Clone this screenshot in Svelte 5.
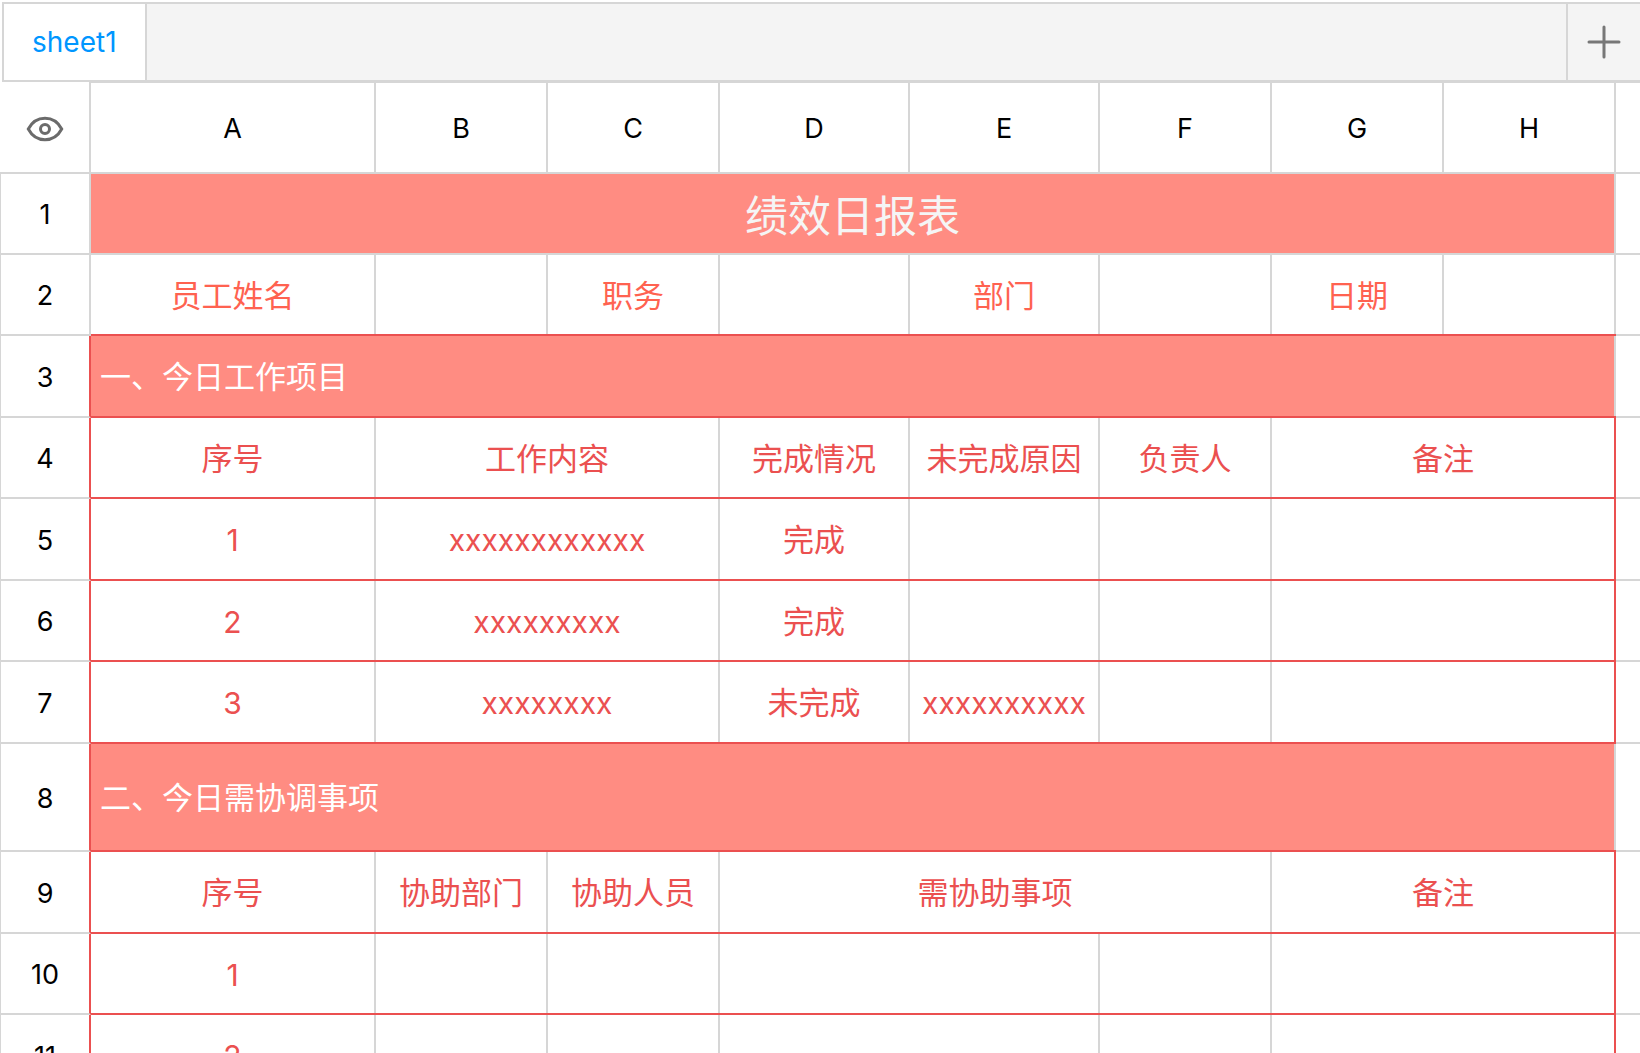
<script lang="ts">
  type Cell = { text?: string; span?: number; kind?: string };
  type Row = { height: number; theme: string; cells: Cell[] };

  const columns = [
    { name: 'A', width: 285 },
    { name: 'B', width: 172 },
    { name: 'C', width: 172 },
    { name: 'D', width: 190 },
    { name: 'E', width: 190 },
    { name: 'F', width: 172 },
    { name: 'G', width: 172 },
    { name: 'H', width: 172 }
  ];

  // Each row lists its cells from left to right; merged cells carry a span
  const rows: Row[] = [
    { height: 81, theme: 'title', cells: [{ text: '绩效日报表', span: 8 }] },
    {
      height: 81,
      theme: 'info',
      cells: [
        { text: '员工姓名' },
        {},
        { text: '职务' },
        {},
        { text: '部门' },
        {},
        { text: '日期' },
        {}
      ]
    },
    { height: 82, theme: 'section', cells: [{ text: '一、今日工作项目', span: 8 }] },
    {
      height: 81,
      theme: 'detail',
      cells: [
        { text: '序号' },
        { text: '工作内容', span: 2 },
        { text: '完成情况' },
        { text: '未完成原因' },
        { text: '负责人' },
        { text: '备注', span: 2 }
      ]
    },
    {
      height: 82,
      theme: 'detail',
      cells: [
        { text: '1', kind: 'latin' },
        { text: 'xxxxxxxxxxxx', span: 2, kind: 'latin' },
        { text: '完成' },
        {},
        {},
        { span: 2 }
      ]
    },
    {
      height: 81,
      theme: 'detail',
      cells: [
        { text: '2', kind: 'latin' },
        { text: 'xxxxxxxxx', span: 2, kind: 'latin' },
        { text: '完成' },
        {},
        {},
        { span: 2 }
      ]
    },
    {
      height: 82,
      theme: 'detail',
      cells: [
        { text: '3', kind: 'latin' },
        { text: 'xxxxxxxx', span: 2, kind: 'latin' },
        { text: '未完成' },
        { text: 'xxxxxxxxxx', kind: 'latin' },
        {},
        { span: 2 }
      ]
    },
    { height: 108, theme: 'section', cells: [{ text: '二、今日需协调事项', span: 8 }] },
    {
      height: 82,
      theme: 'detail',
      cells: [
        { text: '序号' },
        { text: '协助部门' },
        { text: '协助人员' },
        { text: '需协助事项', span: 3 },
        { text: '备注', span: 2 }
      ]
    },
    {
      height: 81,
      theme: 'detail',
      cells: [{ text: '1', kind: 'latin' }, {}, {}, { span: 2 }, {}, { span: 2 }]
    },
    {
      height: 82,
      theme: 'detail',
      cells: [{ text: '2', kind: 'latin' }, {}, {}, { span: 2 }, {}, { span: 2 }]
    }
  ];

  let headersVisible = true;
</script>

<div class="workbook">
  <nav class="tabs">
    <button class="tab">sheet1</button>
    <button class="add" aria-label="新建工作表">
      <svg width="34" height="34" viewBox="0 0 34 34">
        <path d="M17 2v30M2 17h30" />
      </svg>
    </button>
  </nav>

  <table class="sheet">
    <colgroup>
      <col class="col-head" />
      {#each columns as column}
        <col style="width: {column.width}px" />
      {/each}
      <col />
    </colgroup>
    <thead>
      <tr>
        <td class="corner">
          <button
            class="eye"
            aria-label="显示"
            aria-pressed={headersVisible}
            on:click={() => (headersVisible = !headersVisible)}
          >
            <svg width="38" height="26" viewBox="0 0 38 26">
              <path d="M2.300 13C6 6 12 2.300 19 2.300S32 6 35.700 13C32 20 26 23.700 19 23.700S6 20 2.300 13z" />
              <circle cx="19" cy="13" r="4.500" />
            </svg>
          </button>
        </td>
        {#each columns as column}
          <th scope="col">{column.name}</th>
        {/each}
        <th></th>
      </tr>
    </thead>
    <tbody>
      {#each rows as row, i}
        <tr class={row.theme} style="height: {row.height}px">
          <th scope="row">{i + 1}</th>
          {#each row.cells as cell}
            <td class={cell.kind} colspan={cell.span ?? 1}>{cell.text ?? ''}</td>
          {/each}
          <td class="rest"></td>
        </tr>
      {/each}
    </tbody>
  </table>
</div>

<style>
  :global(body) {
    background: #fff;
  }

  .workbook {
    box-sizing: border-box;
    height: 100vh;
    padding-top: 2px;
    overflow: hidden;
    font-family: Inter, 'Noto Sans CJK SC', sans-serif;
    --line: #d6d6d6;
    --red: #eb5050;
    --fill: #ff8c82;
  }

  button {
    padding: 0;
    border: 0;
    background: none;
    font: inherit;
    cursor: pointer;
  }

  svg {
    display: block;
    fill: none;
    stroke: #6b6b6b;
    stroke-width: 3;
  }

  /* Tab bar */
  .tabs {
    display: flex;
    justify-content: space-between;
    height: 76px;
    margin-left: 2px;
    border: 2px solid var(--line);
    border-right: 0;
    background: #f4f4f4;
  }

  .tab {
    padding: 0 28px;
    border-right: 2px solid var(--line);
    background: #fff;
    color: #0096ff;
    font-size: 28px;
  }

  .add {
    display: flex;
    align-items: center;
    justify-content: center;
    width: 74px;
    border-left: 2px solid var(--line);
  }

  .add svg {
    stroke-linecap: round;
    stroke: #777;
  }

  /* Grid */
  .sheet {
    width: 100%;
    table-layout: fixed;
    border-collapse: separate;
    border-spacing: 0;
  }

  .col-head {
    width: 91px;
  }

  th,
  td {
    box-sizing: border-box;
    padding: 3px 0 0;
    border-right: 2px solid var(--line);
    border-bottom: 2px solid var(--line);
    text-align: center;
    vertical-align: middle;
    white-space: nowrap;
    overflow: hidden;
  }

  th {
    color: #000;
    font-size: 27px;
    font-weight: 400;
    line-height: 32px;
  }

  td {
    font-size: 31px;
    line-height: 40px;
  }

  thead tr {
    height: 92px;
  }

  thead th {
    border-top: 1px solid var(--line);
  }

  /* Column lines sit inside the cell so the row lines run unbroken */
  tbody td {
    padding: 2px 2px 0 0;
    border-right: 0;
    box-shadow: inset -2px 0 var(--line);
  }

  th:last-child {
    border-right: 0;
  }

  .rest {
    box-shadow: none;
  }

  tbody th {
    border-left: 1px solid var(--line);
  }

  .eye {
    display: flex;
    justify-content: center;
    width: 100%;
  }

  .latin {
    font-size: 30px;
  }

  /* Row themes */
  .title td:not(.rest) {
    padding-top: 4px;
    background: var(--fill);
    color: #f5f5f5;
    font-size: 43px;
  }

  .info td {
    color: #ff6250;
  }

  .info td:not(.rest),
  .section td:not(.rest),
  .detail td:not(.rest) {
    border-bottom-color: var(--red);
  }

  .section th,
  .detail th {
    border-right-color: var(--red);
  }

  .section td:not(.rest) {
    padding-left: 9px;
    background: var(--fill);
    color: #fff;
    text-align: left;
  }

  .detail td {
    color: var(--red);
  }

  .detail td:nth-last-child(2) {
    box-shadow: inset -2px 0 var(--red);
  }
</style>
